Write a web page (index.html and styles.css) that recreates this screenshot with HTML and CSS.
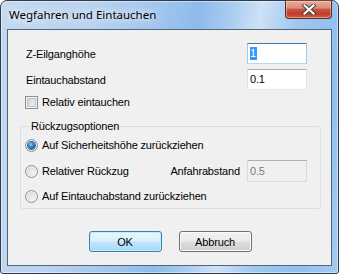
FILE: index.html
```html
<!DOCTYPE html>
<html>
<head>
<meta charset="utf-8">
<link rel="stylesheet" href="styles.css">
</head>
<body>
<div class="window">
  <div class="titlebar">
    <span class="title">Wegfahren und Eintauchen</span>
    <div class="close">
      <svg width="14" height="11" viewBox="0 0 14 11">
        <path d="M2.5 1.5 L11.5 9.5 M11.5 1.5 L2.5 9.5" stroke="#3b3b3b" stroke-width="4" stroke-linecap="square" fill="none"/>
        <path d="M2.5 1.5 L11.5 9.5 M11.5 1.5 L2.5 9.5" stroke="#ffffff" stroke-width="2.2" stroke-linecap="square" fill="none"/>
      </svg>
    </div>
  </div>
  <div class="client">
    <div class="field r1"><label>Z-Eilganghöhe</label><div class="input focus"><span class="sel">1</span></div></div>
    <div class="field r2"><label>Eintauchabstand</label><div class="input">0.1</div></div>
    <div class="checkrow"><span class="check"></span><span>Relativ eintauchen</span></div>
    <fieldset class="group">
      <legend>Rückzugsoptionen</legend>
      <div class="opt o1"><span class="radio checked"></span><span>Auf Sicherheitshöhe zurückziehen</span></div>
      <div class="opt o2"><span class="radio"></span><span class="grow">Relativer Rückzug</span><span class="lbl">Anfahrabstand</span><div class="input disabled">0.5</div></div>
      <div class="opt o3"><span class="radio"></span><span>Auf Eintauchabstand zurückziehen</span></div>
    </fieldset>
    <div class="buttons"><button class="btn default">OK</button><button class="btn">Abbruch</button></div>
  </div>
</div>
</body>
</html>
```

FILE: styles.css
```css
* { box-sizing: border-box; }
html, body { margin: 0; padding: 0; }
body { width: 339px; height: 274px; overflow: hidden; background: #ffffff; }

.window {
  width: 339px;
  height: 274px;
  border: 1px solid #2f3b4a;
  border-radius: 7px 7px 3px 3px;
  padding: 0 6px 7px;
  display: flex;
  flex-direction: column;
  background:
    linear-gradient(100deg, #c4d9f0 0%, #b9d2ef 25%, #a0c5ee 42%, #8dbbec 52%, #a9cbf0 60%, #cde1f6 68%, #a0c7f0 78%, #8fbff0 90%, #a6cbf2 100%);
  box-shadow: inset 0 0 0 1px rgba(255,255,255,0.45);
}

.titlebar {
  height: 28px;
  flex: none;
  display: flex;
  align-items: flex-start;
}
.title {
  flex: 1;
  padding-left: 2px;
  font: 11.5px "Noto Sans", sans-serif;
  line-height: 28px;
  color: #000;
  text-shadow: 0 0 6px rgba(255,255,255,0.95), 0 0 12px rgba(255,255,255,0.8);
}
.close {
  width: 47px;
  height: 19px;
  margin-top: -1px;
  border: 1px solid #5e2a22;
  border-top-color: #7a4138;
  border-radius: 0 0 4px 4px;
  background: linear-gradient(#e8aa9b 0%, #dc8e7d 40%, #c85644 50%, #bf3b29 75%, #d2604a 100%);
  box-shadow: inset 0 0 0 1px rgba(255,220,210,0.45);
  display: flex;
  align-items: center;
  justify-content: center;
}
.close svg { display: block; }

.client {
  flex: 1;
  border: 1px solid #51657c;
  background: #f0f0f0;
  padding: 0 10px 0 12px;
  display: flex;
  flex-direction: column;
  font: 11px "Liberation Sans", Arial, sans-serif;
  letter-spacing: -0.15px;
  color: #000;
}

.field {
  display: flex;
  align-items: center;
  height: 21px;
  padding: 0 14px 0 6px;
}
.field label { flex: 1; }
.r1 { margin-top: 13px; }
.r2 { margin-top: 5px; }

.input {
  width: 60px;
  height: 21px;
  flex: none;
  border: 1px solid;
  border-color: #abadb3 #e2e3ea #e3e9ef #e2e3ea;
  background: #ffffff;
  padding: 0 2px;
  display: flex;
  align-items: center;
  line-height: 13px;
}
.input.focus { border-color: #3d7bad #a4c9e3 #b7d9ed #a4c9e3; }
.sel { background: #3399ff; color: #fff; padding: 0 1px 0 0; }
.input.disabled {
  background: #f0f0f0;
  border-color: #adb2b5 #dadada #dadada #dadada;
  color: #7a7a7a;
  height: 22px;
}

.checkrow {
  margin-top: 2px;
  height: 20px;
  padding-left: 5px;
  display: flex;
  align-items: center;
}
.check {
  width: 13px;
  height: 13px;
  margin-right: 4px;
  flex: none;
  border: 1px solid #8e8f8f;
  background: linear-gradient(135deg, #c6cacf 0%, #e4e6e8 55%, #f4f4f4 100%);
  box-shadow: inset 0 0 0 1px #f4f4f4, inset 0 0 0 2px #c0c4c9;
}

.group {
  margin: 8px 0 0 0;
  min-width: 0;
  padding: 0 13px 2px 4px;
  border: 1px solid #d5dfe5;
  border-radius: 3px;
}
.group legend {
  margin-left: 5px;
  padding: 0 1px;
  line-height: 13px;
}
.opt {
  display: flex;
  align-items: center;
  height: 20px;
}
.o1 { margin-top: 2px; }
.o2 { margin-top: 5px; height: 22px; }
.o3 { margin-top: 4px; }
.grow { flex: 1; }
.lbl { margin-right: 7px; }

.radio {
  width: 13px;
  height: 13px;
  margin-right: 4px;
  flex: none;
  border-radius: 50%;
  border: 1px solid #8e8f8f;
  background: radial-gradient(circle at 65% 65%, #f4f4f4 0%, #dcdee0 60%, #c9ccd0 100%);
  box-shadow: inset 0 0 0 1px #f4f4f4;
  display: flex;
  align-items: center;
  justify-content: center;
}
.radio.checked::after {
  content: "";
  width: 7px;
  height: 7px;
  border-radius: 50%;
  background: radial-gradient(circle at 40% 35%, #8fd0f8 0%, #2a7cc4 45%, #15406f 100%);
  box-shadow: 0 0 0 1px #3d6288;
}

.buttons {
  margin-top: 22px;
  display: flex;
  justify-content: center;
  gap: 17px;
  padding-right: 1px;
}
.btn {
  width: 73px;
  height: 21px;
  margin: 0;
  padding: 0;
  border: 1px solid #707070;
  border-radius: 3px;
  background: linear-gradient(#f2f2f2 0%, #ebebeb 48%, #dddddd 52%, #cfcfcf 100%);
  box-shadow: inset 0 0 0 1px #fbfbfb;
  font: 11px "Liberation Sans", Arial, sans-serif;
  letter-spacing: -0.15px;
  color: #000;
}
.btn.default {
  border-color: #3c7fb1;
  background: linear-gradient(#eaf6fd 0%, #d9f0fc 48%, #bee6fd 52%, #a7d9f5 100%);
  box-shadow: inset 0 0 0 1px #c5ecfc;
}
```
